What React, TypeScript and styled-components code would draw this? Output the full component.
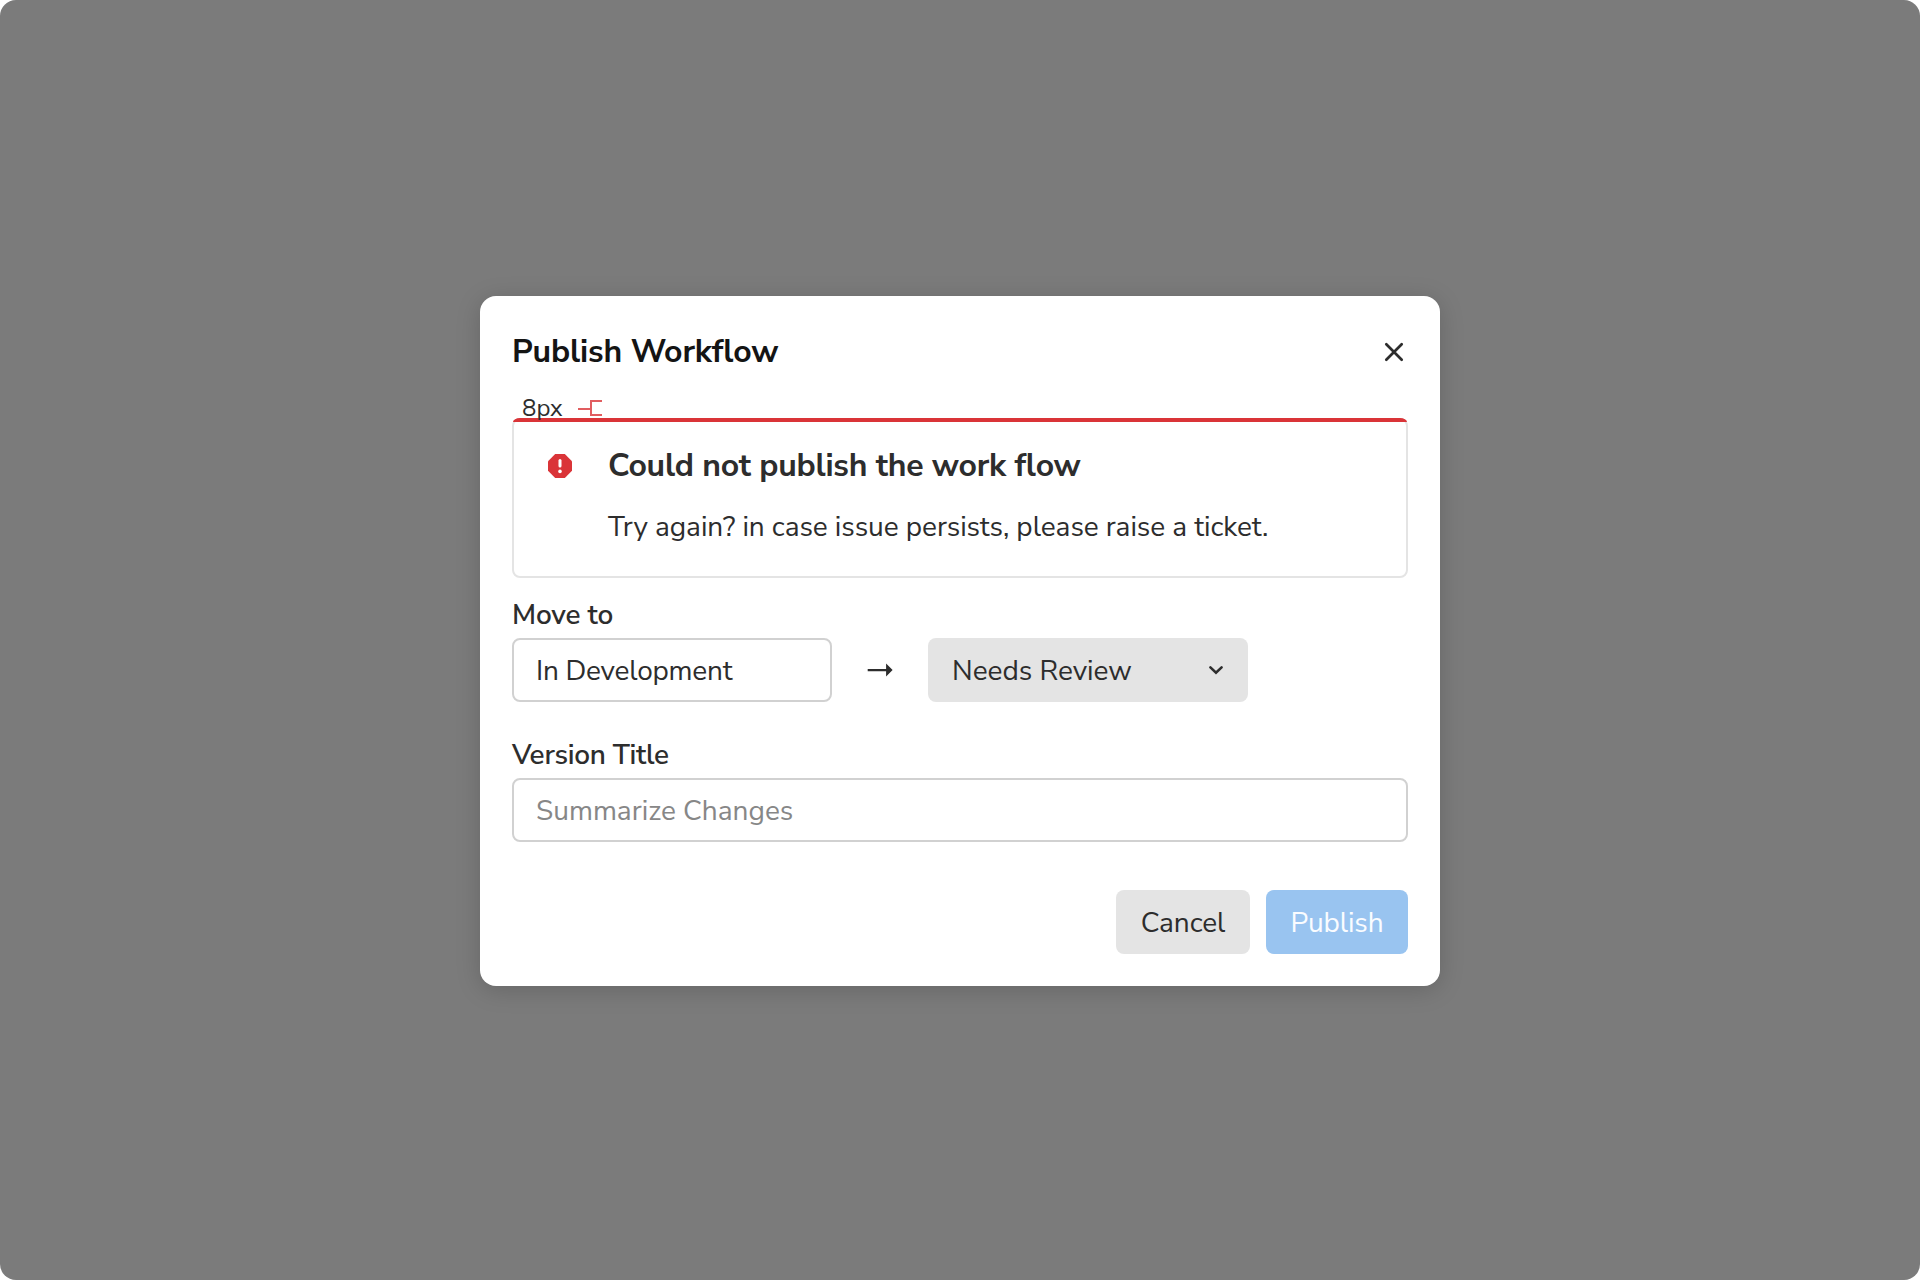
import React from "react";
import styled, { createGlobalStyle } from "styled-components";

const GlobalStyle = createGlobalStyle`
  *, *::before, *::after { box-sizing: border-box; }
  html, body { margin: 0; padding: 0; background: #ffffff; }
  body {
    font-family: "Nunito Sans", Nunito, Lato, "Open Sans", sans-serif;
    font-size: 28px;
    font-weight: 400;
    line-height: 40px;
    color: #2d2d2d;
  }
  h2, h3, p { margin: 0; }
  button, input { font: inherit; color: inherit; }
`;

const Backdrop = styled.main`
  display: flex;
  justify-content: center;
  align-items: flex-start;
  width: 1920px;
  height: 1280px;
  padding-top: 296px;
  border-radius: 16px;
  background: #7b7b7b;
  overflow: hidden;
`;

const Modal = styled.section`
  display: flex;
  flex-direction: column;
  width: 960px;
  height: 690px;
  padding: 32px;
  border-radius: 16px;
  background: #ffffff;
  box-shadow: 0 4px 24px rgba(0, 0, 0, 0.17);
`;

const Header = styled.header`
  display: flex;
  align-items: center;
  justify-content: space-between;
  height: 48px;
`;

const Title = styled.h2`
  font-size: 32px;
  font-weight: 700;
  line-height: 48px;
  letter-spacing: -0.13px;
  color: #141414;
`;

const CloseButton = styled.button`
  display: flex;
  width: 28px;
  height: 28px;
  padding: 0;
  border: 0;
  background: none;
`;

const SpacingNote = styled.div`
  position: relative;
  z-index: 1;
  display: flex;
  align-items: flex-start;
  height: 26px;
  margin-top: 16px;
  padding-left: 10px;
`;

const NoteText = styled.span`
  width: 56px;
  font-size: 24px;
  line-height: 32px;
`;

const NoteBracket = styled.svg`
  margin-top: 8px;
`;

const Alert = styled.div`
  position: relative;
  display: flex;
  gap: 36px;
  height: 160px;
  padding: 24px 34px;
  border: 2px solid #e4e4e4;
  border-radius: 8px;

  &::before {
    content: "";
    position: absolute;
    top: -2px;
    left: -1px;
    right: -1px;
    height: 4px;
    border-radius: 7px 7px 0 0 / 4px 4px 0 0;
    background: #da3438;
  }
`;

const AlertIcon = styled.svg`
  flex: none;
  margin-top: 10px;
`;

const AlertBody = styled.div`
  display: flex;
  flex-direction: column;
  gap: 19px;
`;

const AlertTitle = styled.h3`
  font-size: 32px;
  font-weight: 700;
  line-height: 44px;
  letter-spacing: -0.22px;
`;

const AlertText = styled.p`
  line-height: 40px;
  letter-spacing: -0.05px;
`;

const Field = styled.div<{ $top: number }>`
  display: flex;
  flex-direction: column;
  gap: 2px;
  margin-top: ${(p) => p.$top}px;
`;

const Label = styled.label<{ $tracking: number }>`
  font-weight: 600;
  line-height: 42px;
  letter-spacing: ${(p) => p.$tracking}px;
`;

const StageRow = styled.div`
  display: flex;
  align-items: center;
`;

const Stage = styled.div`
  width: 320px;
  height: 64px;
  padding: 0 22px;
  border: 2px solid #d1d1d1;
  border-radius: 8px;
  line-height: 62px;
  letter-spacing: -0.23px;
`;

const ArrowSlot = styled.div`
  display: flex;
  justify-content: center;
  width: 96px;
`;

const StageSelect = styled.button`
  display: flex;
  align-items: center;
  justify-content: space-between;
  width: 320px;
  height: 64px;
  padding: 0 22px 0 24px;
  border: 0;
  border-radius: 8px;
  background: #e4e4e4;
`;

const StageName = styled.span`
  padding-top: 2px;
`;

const TitleInput = styled.input`
  width: 100%;
  height: 64px;
  padding: 2px 22px 0;
  border: 2px solid #d1d1d1;
  border-radius: 8px;
  background: #ffffff;
  outline: none;

  &::placeholder {
    color: #878787;
    opacity: 1;
  }
`;

const Footer = styled.footer`
  display: flex;
  justify-content: flex-end;
  gap: 16px;
  margin-top: 48px;
`;

const Button = styled.button<{ $primary?: boolean }>`
  width: ${(p) => (p.$primary ? 142 : 134)}px;
  height: 64px;
  padding: 2px 0 0;
  border: 0;
  border-radius: 8px;
  background: ${(p) => (p.$primary ? "#99c4f0" : "#e4e4e4")};
  color: ${(p) => (p.$primary ? "#fafcff" : "#2d2d2d")};
  letter-spacing: -0.12px;
`;

export default function App() {
  return (
    <>
      <GlobalStyle />
      <Backdrop>
        <Modal role="dialog" aria-labelledby="dialog-title">
          <Header>
            <Title id="dialog-title">Publish Workflow</Title>
            <CloseButton aria-label="Close">
              <svg width="28" height="28" viewBox="0 0 28 28" fill="none">
                <path d="M6.3 6.3l15.4 15.4M21.7 6.3L6.3 21.7" stroke="#2d2d2d" strokeWidth="2.7" strokeLinecap="round" />
              </svg>
            </CloseButton>
          </Header>

          <SpacingNote>
            <NoteText>8px</NoteText>
            <NoteBracket width="24" height="16" viewBox="0 0 24 16" fill="none">
              <path d="M24 1H13v14h11M0 9h12" stroke="#e15d60" strokeWidth="2" />
            </NoteBracket>
          </SpacingNote>

          <Alert role="alert">
            <AlertIcon width="24" height="24" viewBox="0 0 24 24">
              <path d="M7.2 0h9.6L24 7.2v9.6L16.8 24H7.2L0 16.8V7.2z" fill="#da3438" />
              <rect x="10.5" y="5" width="3" height="8.6" rx="1.5" fill="#fff" />
              <circle cx="12" cy="17.4" r="1.8" fill="#fff" />
            </AlertIcon>
            <AlertBody>
              <AlertTitle>Could not publish the work flow</AlertTitle>
              <AlertText>Try again? in case issue persists, please raise a ticket.</AlertText>
            </AlertBody>
          </Alert>

          <Field $top={16}>
            <Label as="span" $tracking={-0.16}>Move to</Label>
            <StageRow>
              <Stage>In Development</Stage>
              <ArrowSlot>
                <svg width="26" height="14" viewBox="0 0 26 14" fill="#2d2d2d">
                  <path d="M0.7 5.9h18.4V0.6L25.6 7l-6.5 6.4V8.3H0.7z" />
                </svg>
              </ArrowSlot>
              <StageSelect>
                <StageName>Needs Review</StageName>
                <svg width="20" height="20" viewBox="0 0 20 20" fill="none">
                  <path d="M4.4 7.4l5.6 5.3 5.6-5.3" stroke="#2d2d2d" strokeWidth="2.6" strokeLinecap="round" />
                </svg>
              </StageSelect>
            </StageRow>
          </Field>

          <Field $top={32}>
            <Label htmlFor="version-title" $tracking={-0.28}>Version Title</Label>
            <TitleInput id="version-title" placeholder="Summarize Changes" />
          </Field>

          <Footer>
            <Button>Cancel</Button>
            <Button $primary>Publish</Button>
          </Footer>
        </Modal>
      </Backdrop>
    </>
  );
}
